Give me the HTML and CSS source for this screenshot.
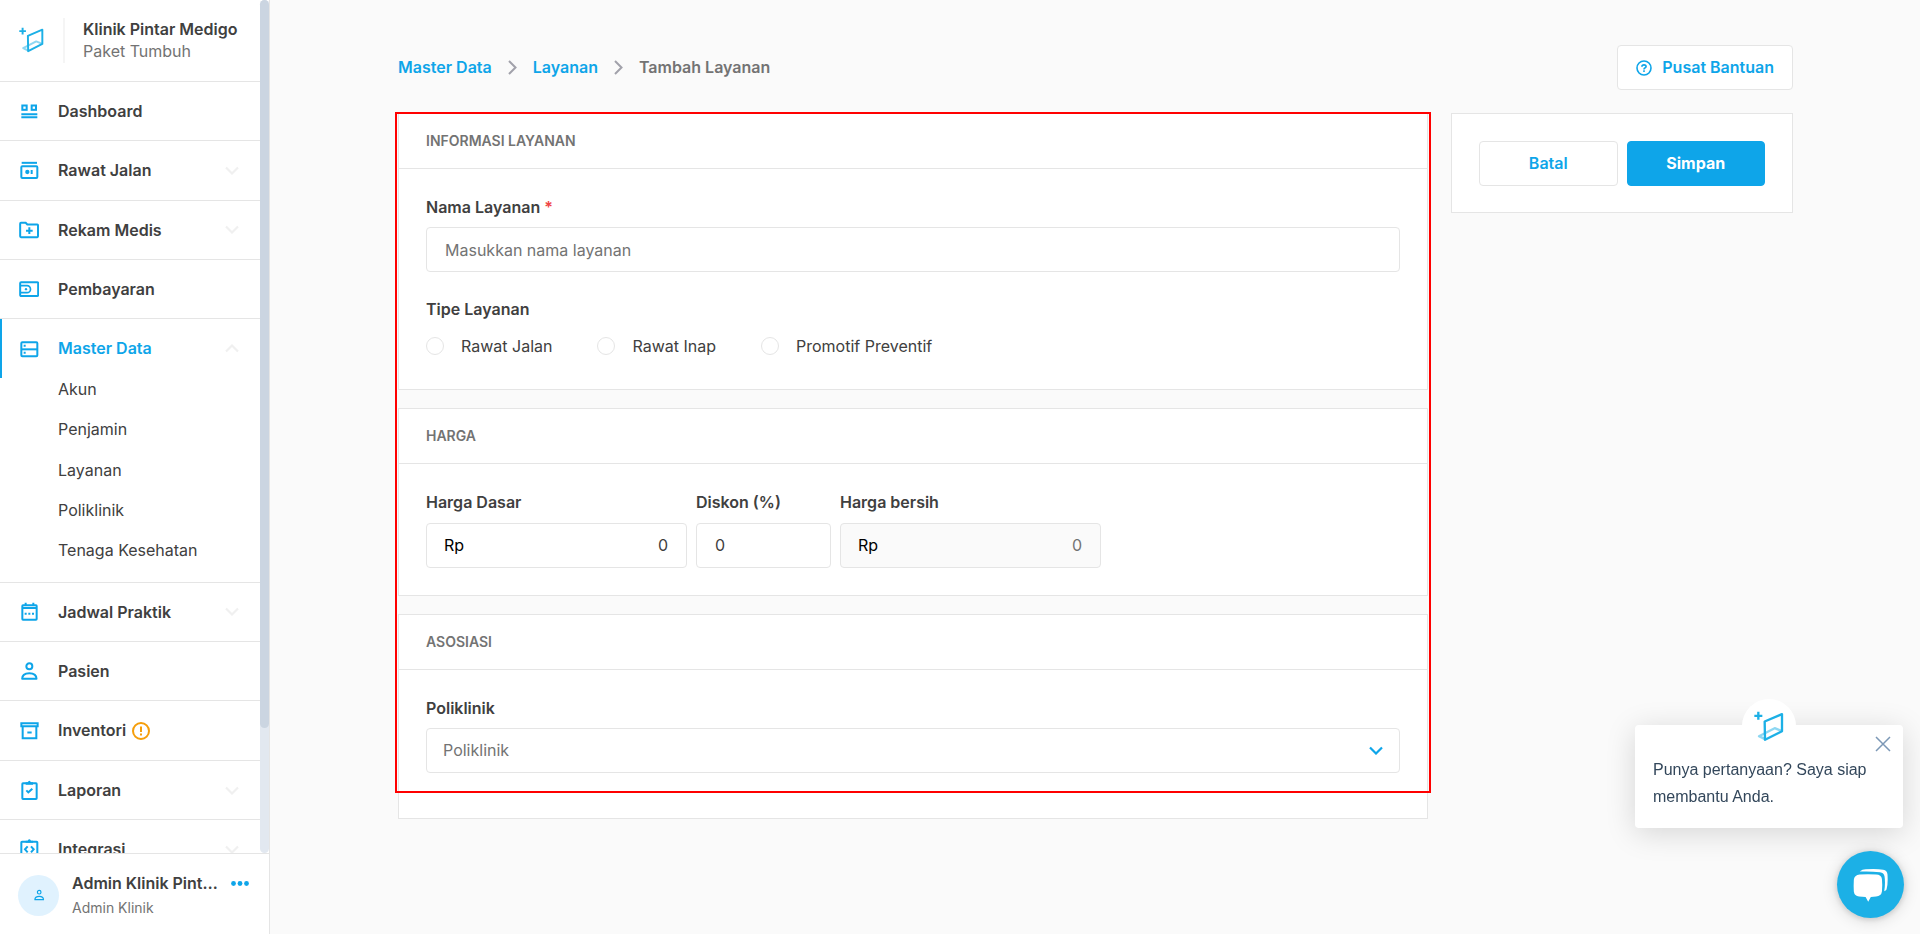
FILE: index.html
```html
<!DOCTYPE html>
<html lang="id">
<head>
<meta charset="utf-8">
<meta name="viewport" content="width=device-width, initial-scale=1">
<title>Tambah Layanan</title>
<link rel="stylesheet" href="styles.css">
</head>
<body>
<svg class="symbols" aria-hidden="true">
  <symbol id="logo" viewBox="0 0 90 92">
    <path d="M33 84L15 75L62 51L84 60" fill="none" stroke="#1cb0e6" stroke-width="7" stroke-linejoin="round" opacity=".5"/>
    <path d="M32 31L84 9V60L33 86Z" fill="none" stroke="#1cb0e6" stroke-width="7" stroke-linejoin="round"/>
    <path d="M13 2V26M1 14H25" stroke="#1cb0e6" stroke-width="7"/>
  </symbol>
  <symbol id="down" viewBox="0 0 14 9"><path d="M1 1.500L7 7.500L13 1.500" fill="none" stroke="currentColor" stroke-width="2.200"/></symbol>
  <symbol id="person" viewBox="0 0 60 60">
    <g fill="none" stroke="currentColor" stroke-width="6"><circle cx="31" cy="16" r="9"/><path d="M9.500 53.500C9.500 43 18 36.500 31 36.500S52.500 43 52.500 53.500Z" stroke-linejoin="round"/></g>
  </symbol>
</svg>

<div class="app">
  <aside class="sidebar">
    <div class="sidebar-scroll">
      <div class="sidebar-content">
        <header class="brand">
          <svg class="brand-logo"><use href="#logo"/></svg>
          <div class="brand-text"><strong>Klinik Pintar Medigo</strong><span>Paket Tumbuh</span></div>
        </header>
        <nav>
          <ul class="menu">
            <li><a class="menu-link" href="#">
              <svg class="icon" viewBox="0 0 60 60"><g fill="none" stroke="currentColor" stroke-width="6"><rect x="10" y="13.500" width="13" height="13"/><rect x="38" y="13.500" width="13" height="13"/><path d="M7 39.500H55M7 49H55"/></g></svg>
              <span>Dashboard</span></a></li>
            <li><a class="menu-link" href="#">
              <svg class="icon" viewBox="0 0 60 60"><g fill="none" stroke="currentColor" stroke-width="6"><path d="M8 8.500H54"/><rect x="7" y="19" width="48" height="35" rx="3"/><path d="M38 30V42"/></g><circle cx="25" cy="36" r="6.500" fill="currentColor"/></svg>
              <span>Rawat Jalan</span><svg class="caret"><use href="#down"/></svg></a></li>
            <li><a class="menu-link" href="#">
              <svg class="icon" viewBox="0 0 60 60"><path d="M3.500 11Q3.500 8.500 6 8.500H20L25 13.500H55Q57 13.500 57 16V49Q57 51.500 55 51.500H6Q3.500 51.500 3.500 49ZM31 22V42M21 32H41" fill="none" stroke="currentColor" stroke-width="6"/></svg>
              <span>Rekam Medis</span><svg class="caret"><use href="#down"/></svg></a></li>
            <li><a class="menu-link" href="#">
              <svg class="icon" viewBox="0 0 60 60"><g fill="none" stroke="currentColor" stroke-width="6"><rect x="3.500" y="10" width="54" height="41" rx="3"/><path d="M4 20H24A10.500 10.500 0 0 1 24 41H4" stroke-width="5"/></g><circle cx="21" cy="30.500" r="3.500" fill="currentColor"/></svg>
              <span>Pembayaran</span></a></li>
            <li class="open"><a class="menu-link" href="#" aria-expanded="true">
              <svg class="icon" viewBox="0 0 60 60"><g fill="none" stroke="currentColor" stroke-width="6"><rect x="7" y="10" width="48" height="42" rx="3"/><path d="M6 31H55"/></g><path d="M14 17.500h6v6h-6zM14 38.500h6v6h-6z" fill="currentColor"/></svg>
              <span>Master Data</span><svg class="caret"><use href="#down"/></svg></a>
              <ul class="submenu">
                <li><a href="#">Akun</a></li>
                <li><a href="#">Penjamin</a></li>
                <li><a href="#">Layanan</a></li>
                <li><a href="#">Poliklinik</a></li>
                <li><a href="#">Tenaga Kesehatan</a></li>
              </ul></li>
            <li><a class="menu-link" href="#">
              <svg class="icon" viewBox="0 0 60 60"><g fill="none" stroke="currentColor" stroke-width="6"><rect x="10" y="10" width="43" height="43" rx="2"/><path d="M20 2V10M43 2V10"/><path d="M9 18H53"/></g><path d="M17 32h6v6h-6zM28 32h6v6h-6zM39 32h6v6h-6z" fill="currentColor"/></svg>
              <span>Jadwal Praktik</span><svg class="caret"><use href="#down"/></svg></a></li>
            <li><a class="menu-link" href="#">
              <svg class="icon"><use href="#person"/></svg>
              <span>Pasien</span></a></li>
            <li><a class="menu-link" href="#">
              <svg class="icon" viewBox="0 0 60 60"><g fill="none" stroke="currentColor" stroke-width="6"><path d="M4 7H59M4 16H59M7 5V17M56 5V17"/><path d="M11 17V52H52V17"/><path d="M25 34.500H38"/></g></svg>
              <span>Inventori</span>
              <svg class="warning" viewBox="0 0 18 18"><circle cx="9" cy="9" r="8" fill="none" stroke="currentColor" stroke-width="2"/><path d="M9 4.500V10M9 11.500V13.500" stroke="currentColor" stroke-width="2"/></svg></a></li>
            <li><a class="menu-link" href="#">
              <svg class="icon" viewBox="0 0 60 60"><g fill="none" stroke="currentColor" stroke-width="6"><rect x="10" y="10" width="43" height="47" rx="2"/><path d="M22 31L28 37L40 26"/></g><path d="M20 14V7H26Q31-3 36 7H42V14Z" fill="currentColor"/></svg>
              <span>Laporan</span><svg class="caret"><use href="#down"/></svg></a></li>
            <li><a class="menu-link" href="#">
              <svg class="icon" viewBox="0 0 60 60"><g fill="none" stroke="currentColor" stroke-width="6"><rect x="7" y="8" width="48" height="47" rx="2"/><path d="M26 22L18 31L26 40M36 22L44 31L36 40"/></g><path d="M20 11V5H26Q31-3 36 5H42V11Z" fill="currentColor"/></svg>
              <span>Integrasi</span><svg class="caret"><use href="#down"/></svg></a></li>
          </ul>
        </nav>
      </div>
      <div class="track"><div class="thumb"></div></div>
    </div>
    <footer class="user">
      <div class="avatar"><svg class="avatar-icon"><use href="#person"/></svg></div>
      <div class="user-text"><strong>Admin Klinik Pintar Medigo</strong><span>Admin Klinik</span></div>
      <button class="more" type="button" aria-label="Menu akun"><svg class="dots" viewBox="0 0 18 5"><g fill="currentColor"><circle cx="2.500" cy="2.500" r="2.400"/><circle cx="9" cy="2.500" r="2.400"/><circle cx="15.500" cy="2.500" r="2.400"/></g></svg></button>
    </footer>
  </aside>

  <main class="main">
    <div class="topbar">
      <nav class="breadcrumb" aria-label="Breadcrumb">
        <a href="#">Master Data</a>
        <svg class="sep" viewBox="0 0 9 15"><path d="M1 1L7.500 7.500L1 14" fill="none" stroke="currentColor" stroke-width="2"/></svg>
        <a href="#">Layanan</a>
        <svg class="sep" viewBox="0 0 9 15"><path d="M1 1L7.500 7.500L1 14" fill="none" stroke="currentColor" stroke-width="2"/></svg>
        <span>Tambah Layanan</span>
      </nav>
      <button class="btn help" type="button">
        <svg class="help-icon" viewBox="0 0 16 16"><g fill="none" stroke="currentColor" stroke-width="1.600"><circle cx="8" cy="8" r="7"/><path d="M5.900 6.700Q5.900 4.900 8 4.900T10.100 6.600Q10.100 7.500 8.900 8Q8 8.400 8 9.500"/></g><path d="M7.200 10.300h1.600v1.600H7.200z" fill="currentColor"/></svg>
        Pusat Bantuan</button>
    </div>

    <div class="columns">
      <form class="form" id="service-form">
        <section class="card">
          <h2>Informasi Layanan</h2>
          <div class="card-body">
            <div class="field">
              <label for="nama">Nama Layanan <span class="required">*</span></label>
              <input class="control" id="nama" type="text" placeholder="Masukkan nama layanan">
            </div>
            <fieldset class="types">
              <legend>Tipe Layanan</legend>
              <div class="radios">
                <label><input type="radio" name="tipe">Rawat Jalan</label>
                <label><input type="radio" name="tipe">Rawat Inap</label>
                <label><input type="radio" name="tipe">Promotif Preventif</label>
              </div>
            </fieldset>
          </div>
        </section>
        <section class="card">
          <h2>Harga</h2>
          <div class="card-body prices">
            <div class="field price">
              <label for="dasar">Harga Dasar</label>
              <div class="control money"><span>Rp</span><input id="dasar" type="text" value="0"></div>
            </div>
            <div class="field discount">
              <label for="diskon">Diskon (%)</label>
              <input class="control" id="diskon" type="text" value="0">
            </div>
            <div class="field price">
              <label for="bersih">Harga bersih</label>
              <div class="control money readonly"><span>Rp</span><input id="bersih" type="text" value="0" readonly></div>
            </div>
          </div>
        </section>
        <section class="card">
          <h2>Asosiasi</h2>
          <div class="card-body last">
            <div class="field">
              <label for="poli">Poliklinik</label>
              <div class="select-wrap">
                <select class="control" id="poli"><option>Poliklinik</option></select>
                <svg class="select-caret"><use href="#down"/></svg>
              </div>
            </div>
          </div>
        </section>
        <div class="highlight"></div>
      </form>
      <aside class="card actions">
        <button class="btn" type="button">Batal</button>
        <button class="btn primary" type="submit" form="service-form">Simpan</button>
      </aside>
    </div>
  </main>
</div>

<div class="chat-popup">
  <div class="chat-logo"><svg class="chat-logo-icon"><use href="#logo"/></svg></div>
  <button class="close" type="button" aria-label="Tutup"><svg class="close-icon" viewBox="0 0 16 16"><path d="M1 1L15 15M15 1L1 15" stroke="currentColor" stroke-width="1.500"/></svg></button>
  <p>Punya pertanyaan? Saya siap membantu Anda.</p>
</div>
<button class="chat-button" type="button" aria-label="Buka obrolan">
  <svg class="chat-icon" viewBox="0 0 106 104"><g fill="#fff"><path d="M20 20Q45 18 70 20Q86 20 88 34Q90 54 88 72Q86 86 70 87L54 89L46 103L38 89L18 87Q4 86 2 72Q1 54 2 36Q3 22 20 20Z"/><path d="M20 11Q28 4 38 4Q70 2 92 5Q104 6 105 20Q107 50 102 66Q100 70 95 71Q99 46 96 26Q94 14 82 13Q50 9 20 11Z"/></g></svg>
</button>
</body>
</html>
```
FILE: styles.css
```css
:root {
  --blue: #0ea5e9;
  --ink: #404040;
  --muted: #737373;
  --line: #e5e5e5;
}

* { box-sizing: border-box; }

body {
  margin: 0;
  background: #fafafa;
  color: var(--ink);
  font: 16px/1.4 Inter, "Liberation Sans", sans-serif;
}

button, input, select { font: inherit; color: inherit; }
button { cursor: pointer; }
a { color: inherit; text-decoration: none; }
ul { list-style: none; margin: 0; padding: 0; }
svg { display: block; flex: none; }
strong { font-weight: 600; }
.symbols { position: absolute; width: 0; height: 0; }

.app { display: flex; min-height: 100vh; }

/* Sidebar */
.sidebar {
  position: sticky;
  top: 0;
  flex: none;
  display: flex;
  flex-direction: column;
  width: 270px;
  height: 100vh;
  background: #fff;
  border-right: 1px solid var(--line);
}
.sidebar-scroll { flex: 1; min-height: 0; display: flex; overflow: hidden; }
.sidebar-content { flex: 1; min-width: 0; }
.track { flex: none; width: 9px; background: #e2e8f0; border-radius: 5px; }
.thumb { height: 85.400%; background: #cbd5e1; border-radius: 5px; }

.brand { display: flex; align-items: center; padding: 18px 18px 18px 19px; }
.brand-logo { width: 25px; height: 26px; }
.brand-text {
  display: flex;
  flex-direction: column;
  margin-left: 19px;
  padding-left: 18px;
  border-left: 2px solid #f5f5f5;
  white-space: nowrap;
}
.brand-text span { color: var(--muted); }

.menu > li { border-top: 1px solid var(--line); }
.menu-link {
  display: flex;
  align-items: center;
  padding: 18px 21px 18px 19px;
  font-weight: 600;
}
.icon { width: 20px; height: 20px; margin-right: 19px; color: var(--blue); }
.caret { width: 14px; height: 9px; margin-left: auto; color: #f0f0f0; }
.warning { width: 18px; height: 18px; margin-left: 6px; color: #f59e0b; }
.open .menu-link { color: var(--blue); border-left: 2px solid var(--blue); padding-left: 17px; }
.open .caret { transform: rotate(180deg); }
.submenu { display: grid; gap: 18px; padding: 0 18px 20px 58px; }
.submenu a { display: block; }

.user {
  display: flex;
  align-items: center;
  gap: 13px;
  padding: 18px 20px 16px 18px;
  border-top: 1px solid var(--line);
}
.avatar {
  flex: none;
  display: grid;
  place-items: center;
  width: 41px;
  height: 41px;
  border-radius: 50%;
  background: #e0f2fe;
  color: var(--blue);
}
.avatar-icon { width: 12px; height: 12px; }
.user-text { flex: 1; min-width: 0; display: flex; flex-direction: column; gap: 4px; }
.user-text strong { overflow: hidden; text-overflow: ellipsis; white-space: nowrap; }
.user-text span { font-size: 14px; color: var(--muted); }
.more { align-self: flex-start; padding: 9px 0; border: 0; background: none; color: var(--blue); }
.dots { width: 18px; height: 5px; }

/* Main area */
.main { flex: 1; min-width: 0; padding: 45px 127px 0 128px; }
.topbar { display: flex; align-items: center; justify-content: space-between; margin-bottom: 23px; }
.breadcrumb { display: flex; align-items: center; gap: 16px; font-weight: 600; color: var(--muted); }
.breadcrumb a { color: var(--blue); }
.sep { width: 9px; height: 15px; color: #a1a1aa; }

.btn {
  display: flex;
  align-items: center;
  justify-content: center;
  height: 45px;
  padding: 0 18px;
  border: 1px solid var(--line);
  border-radius: 4px;
  background: #fff;
  color: var(--blue);
  font-weight: 600;
}
.btn.primary { background: var(--blue); border-color: var(--blue); color: #fff; font-weight: 700; }
.help { gap: 10px; }
.help-icon { width: 16px; height: 16px; }

.columns { display: grid; grid-template-columns: minmax(0, 1fr) 342px; gap: 23px; align-items: start; }
.form { position: relative; display: grid; gap: 18px; }
.card { background: #fff; border: 1px solid var(--line); }
.card h2 {
  margin: 0;
  padding: 17px 27px;
  border-bottom: 1px solid var(--line);
  font-size: 14px;
  line-height: 20px;
  font-weight: 600;
  text-transform: uppercase;
  color: var(--muted);
}
.card-body { padding: 27px; }
.card-body.last { padding-bottom: 45px; }
.field { display: grid; grid-template-columns: minmax(0, 1fr); gap: 9px; }
.field > label, legend { font-weight: 600; }
.required { color: #ef4444; }

.control {
  width: 100%;
  height: 45px;
  padding: 0 18px;
  border: 1px solid var(--line);
  border-radius: 4px;
  background: #fff;
  outline: 0;
}
.control::placeholder { color: var(--muted); opacity: 1; }
.prices { display: flex; gap: 9px; }
.price { flex: 0 1 261px; min-width: 0; }
.discount { flex: 0 1 135px; min-width: 0; }
.money { display: flex; align-items: center; padding-left: 17px; color: #000; }
.money input {
  flex: 1;
  min-width: 0;
  border: 0;
  padding: 0;
  background: none;
  text-align: right;
  color: var(--ink);
  outline: 0;
}
.readonly { background: #fafafa; }
.money.readonly input { color: var(--muted); }

.types { margin: 26px 0 5px; padding: 0; border: 0; }
legend { padding: 0; }
.radios { display: flex; gap: 45px; padding-top: 14px; }
.radios label { display: flex; align-items: center; gap: 17px; }
.radios input {
  appearance: none;
  width: 18px;
  height: 18px;
  margin: 0;
  border: 1px solid var(--line);
  border-radius: 50%;
  background: #fff;
}
.radios input:checked { border: 5px solid var(--blue); }

.select-wrap { display: grid; align-items: center; }
.select-wrap > * { grid-area: 1 / 1; }
.select-wrap select { appearance: none; padding: 0 16px; color: var(--muted); }
.select-caret { width: 14px; height: 9px; justify-self: end; margin-right: 17px; color: var(--blue); pointer-events: none; }

.highlight {
  position: absolute;
  inset: -1px -3px 26px;
  border: 2px solid #f00;
  pointer-events: none;
}

.actions { display: grid; grid-template-columns: 1fr 1fr; gap: 9px; padding: 27px 27px 26px; }

/* Chat widget */
.chat-popup {
  position: fixed;
  right: 17px;
  bottom: 106px;
  width: 268px;
  padding: 31px 18px 18px;
  border-radius: 4px;
  background: #fff;
  box-shadow: 0 5px 30px rgba(0, 0, 0, .15);
  color: #33475b;
  font: 16px/27px "Liberation Sans", Arial, sans-serif;
}
.chat-popup p { margin: 0; }
.chat-logo {
  position: absolute;
  top: -26px;
  left: 107px;
  display: grid;
  place-items: center;
  width: 54px;
  height: 54px;
  border-radius: 50%;
  background: #fff;
}
.chat-logo-icon { width: 30px; height: 31px; }
.close { position: absolute; top: 11px; right: 12px; padding: 0; border: 0; background: none; color: #7c98b6; }
.close-icon { width: 16px; height: 16px; }
.chat-button {
  position: fixed;
  right: 16px;
  bottom: 16px;
  display: grid;
  place-items: center;
  width: 67px;
  height: 67px;
  padding: 0;
  border: 0;
  border-radius: 50%;
  background: #1cb0e6;
  box-shadow: 0 1px 6px rgba(0, 0, 0, .15), 0 2px 16px rgba(0, 0, 0, .15);
}
.chat-icon { width: 35px; height: 34px; }
```
